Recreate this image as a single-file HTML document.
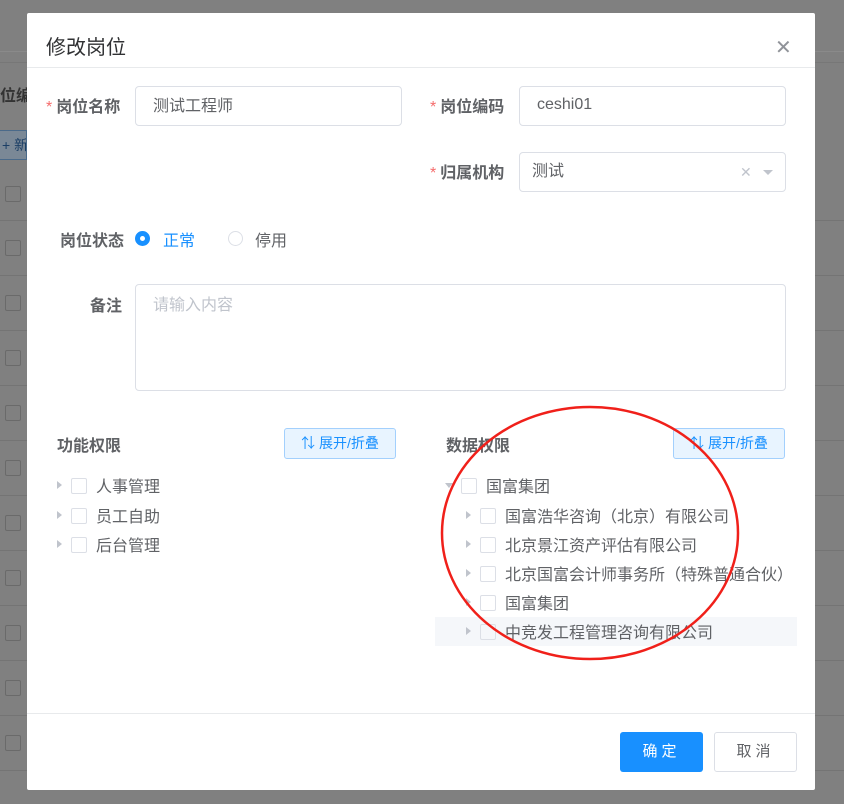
<!DOCTYPE html>
<html><head><meta charset="utf-8"><style>
*{box-sizing:border-box;margin:0;padding:0}
body{width:844px;height:804px;background:#808080;font-family:"Liberation Sans","Noto Sans CJK SC",sans-serif;position:relative;overflow:hidden;color:#606266}
.bg{position:absolute;left:0;width:844px;height:1px;background:#747474}
.cb0{position:absolute;left:5px;width:16px;height:16px;border:1px solid #6a6a6a;border-radius:2px}
.modal{position:absolute;left:27px;top:13px;width:788px;height:777px;background:#fff;border-radius:2px}
.title{position:absolute;left:19px;top:18px;font-size:20px;color:#303133}
.close{position:absolute;left:748px;top:22px;font-size:20px;color:#909399}
.hr{position:absolute;left:0;width:788px;height:1px;background:#e8eaec}
.lab{position:absolute;font-size:16px;font-weight:bold;color:#606266;text-align:right}
.lab i{color:#f56c6c;font-style:normal;font-weight:normal;margin-right:4px}
.inp{position:absolute;border:1px solid #dcdfe6;border-radius:4px;font-size:16px;color:#606266;padding-left:17px;line-height:38px;height:40px}
.ab{position:absolute;font-size:16px}
.btn{position:absolute;border:1px solid #a3d0fd;background:#e8f4ff;color:#1890ff;font-size:14px;border-radius:3px;text-align:center;line-height:29px;height:31px;width:112px}
.tr{position:absolute;font-size:16px;color:#606266;white-space:nowrap}
.tr .ar{display:inline-block;width:0;height:0;border-left:5px solid #c0c4cc;border-top:4px solid transparent;border-bottom:4px solid transparent;margin-right:9px;vertical-align:3px}
.tr .cb{display:inline-block;width:16px;height:16px;border:1px solid #dcdfe6;border-radius:2px;vertical-align:-2px;margin-right:9px}
</style></head><body>
<div class="bg" style="top:51px;background:#8a8a8a"></div>
<div class="bg" style="top:62px;background:#777"></div>
<div style="position:absolute;left:0;top:82px;font-size:16px;font-weight:bold;color:#333;white-space:nowrap">位编</div>
<div style="position:absolute;left:-3px;top:130px;width:30px;height:30px;border:1px solid #4a6a8a;background:#7a8896;color:#1c3f66;font-size:14px;line-height:28px;padding-left:4px;white-space:nowrap;overflow:hidden">+ 新</div>
<div class="bg" style="top:220px"></div><div class="bg" style="top:275px"></div><div class="bg" style="top:330px"></div><div class="bg" style="top:385px"></div><div class="bg" style="top:440px"></div><div class="bg" style="top:495px"></div><div class="bg" style="top:550px"></div><div class="bg" style="top:605px"></div><div class="bg" style="top:660px"></div><div class="bg" style="top:715px"></div><div class="bg" style="top:770px"></div>
<div class="cb0" style="top:186px"></div><div class="cb0" style="top:240px"></div><div class="cb0" style="top:295px"></div><div class="cb0" style="top:350px"></div><div class="cb0" style="top:405px"></div><div class="cb0" style="top:460px"></div><div class="cb0" style="top:515px"></div><div class="cb0" style="top:570px"></div><div class="cb0" style="top:625px"></div><div class="cb0" style="top:680px"></div><div class="cb0" style="top:735px"></div>
<div class="modal">
<div class="title">修改岗位</div>
<div class="close">✕</div>
<div class="hr" style="top:54px"></div>
<div class="lab" style="left:19px;top:80px"><i>*</i>岗位名称</div>
<div class="inp" style="left:108px;top:73px;width:267px;line-height:40px">测试工程师</div>
<div class="lab" style="left:403px;top:80px"><i>*</i>岗位编码</div>
<div class="inp" style="left:492px;top:73px;width:267px;line-height:36px">ceshi01</div>
<div class="lab" style="left:403px;top:146px"><i>*</i>归属机构</div>
<div class="inp" style="left:492px;top:139px;width:267px;padding-left:12px">测试<span style="position:absolute;left:220px;color:#c0c4cc;font-size:14px">✕</span><span style="position:absolute;left:243px;top:17px;border-top:5px solid #c0c4cc;border-left:5px solid transparent;border-right:5px solid transparent"></span></div>
<div class="lab" style="left:33px;top:214px">岗位状态</div>
<div style="position:absolute;left:108px;top:218px;width:15px;height:15px;border-radius:50%;background:#1890ff"><div style="position:absolute;left:5px;top:5px;width:5px;height:5px;border-radius:50%;background:#fff"></div></div>
<div class="ab" style="left:136px;top:214px;color:#1890ff">正常</div>
<div style="position:absolute;left:201px;top:218px;width:15px;height:15px;border-radius:50%;border:1px solid #dcdfe6"></div>
<div class="ab" style="left:228px;top:214px;color:#606266">停用</div>
<div class="lab" style="left:63px;top:279px">备注</div>
<div class="inp" style="left:108px;top:271px;width:651px;height:107px;line-height:normal;padding-top:6px;color:#c0c4cc">请输入内容</div>
<div class="lab" style="left:30px;top:419px">功能权限</div>
<div class="btn" style="left:257px;top:415px">⇅ 展开/折叠</div>
<div class="lab" style="left:419px;top:419px">数据权限</div>
<div class="btn" style="left:646px;top:415px">⇅ 展开/折叠</div>
<div class="tr" style="left:30px;top:460px"><span class="ar"></span><span class="cb"></span>人事管理</div>
<div class="tr" style="left:30px;top:490px"><span class="ar"></span><span class="cb"></span>员工自助</div>
<div class="tr" style="left:30px;top:519px"><span class="ar"></span><span class="cb"></span>后台管理</div>
<div style="position:absolute;left:408px;top:604px;width:362px;height:29px;background:#f5f7fa"></div>
<div class="tr" style="left:418px;top:460px"><span class="ar" style="border-left:4px solid transparent;border-right:4px solid transparent;border-top:5px solid #c0c4cc;border-bottom:0;vertical-align:4px;margin-right:8px"></span><span class="cb"></span>国富集团</div>
<div class="tr" style="left:439px;top:490px"><span class="ar"></span><span class="cb"></span>国富浩华咨询（北京）有限公司</div>
<div class="tr" style="left:439px;top:519px"><span class="ar"></span><span class="cb"></span>北京景江资产评估有限公司</div>
<div class="tr" style="left:439px;top:548px"><span class="ar"></span><span class="cb"></span>北京国富会计师事务所（特殊普通合伙）</div>
<div class="tr" style="left:439px;top:577px"><span class="ar"></span><span class="cb"></span>国富集团</div>
<div class="tr" style="left:439px;top:606px"><span class="ar"></span><span class="cb"></span>中竞发工程管理咨询有限公司</div>
<div class="hr" style="top:700px"></div>
<div style="position:absolute;left:593px;top:719px;width:83px;height:40px;background:#1890ff;border-radius:3px;color:#fff;font-size:15px;text-align:center;line-height:40px;letter-spacing:4px">确定</div>
<div style="position:absolute;left:687px;top:719px;width:83px;height:40px;border:1px solid #dcdfe6;border-radius:3px;color:#606266;font-size:15px;text-align:center;line-height:38px;letter-spacing:4px">取消</div>
</div>
<svg style="position:absolute;left:0;top:0" width="844" height="804"><ellipse cx="590" cy="533" rx="148" ry="126" fill="none" stroke="#f0201a" stroke-width="2.5"/></svg>
</body></html>
